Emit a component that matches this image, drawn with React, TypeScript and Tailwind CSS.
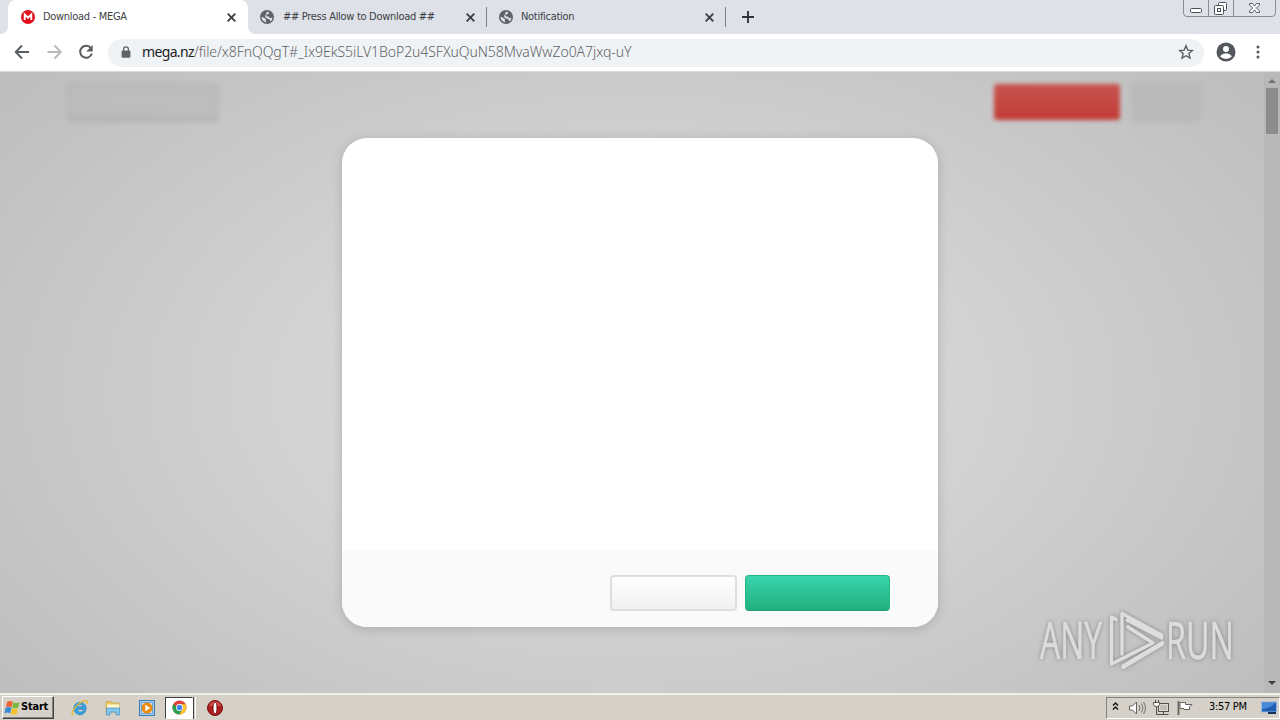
import React from 'react';

function Globe() {
  return (
    <svg className="h-[14px] w-[14px] shrink-0" viewBox="0 0 14 14">
      <circle cx="7" cy="7" r="7" fill="#5f6368" />
      <path d="M7 1.500 9.200 2.400 8.600 4 6.600 4.600 6.200 6.200 8.800 6.600 9.800 8.200 12.300 7.600 12 9.800 10.600 11.400 9.400 9.400 7.400 8.400 5.600 7.800 5 6 6 4.200zM1.500 6.800 4 7.800 6.200 9.400 5.600 10.600 6.800 12.400 4 11.600 2 9.400z" fill="#dee1e8" />
    </svg>
  );
}

function Cross() {
  return (
    <svg className="h-[9px] w-[9px] shrink-0" viewBox="0 0 9 9">
      <path d="M.7.7l7.600 7.600M8.300.7L.7 8.300" stroke="#3c4043" strokeWidth="1.900" />
    </svg>
  );
}

function TabStrip() {
  return (
    <div className="flex h-[34px] bg-[#dee1e8] font-['DejaVu_Sans_Condensed','DejaVu_Sans',sans-serif] text-[11px] text-[#3c4043]">
      <div className="flex w-[8px] shrink-0 bg-white">
        <div className="h-full w-full rounded-br-[7px] bg-[#dee1e8]" />
      </div>
      <div className="flex w-[240px] shrink-0 items-center rounded-t-[8px] bg-white pr-[12px] pl-[13px]">
        <svg className="h-[14px] w-[14px] shrink-0" viewBox="0 0 14 14">
          <circle cx="7" cy="7" r="7" fill="#e0101c" />
          <path d="M3.700 10V4.600L7 7.800l3.300-3.200V10" fill="none" stroke="#fff" strokeWidth="1.900" />
        </svg>
        <span className="ml-[8px] flex-1 whitespace-nowrap tracking-[-0.3px]">Download - MEGA</span>
        <Cross />
      </div>
      <div className="flex w-[239px] shrink-0 bg-white">
        <div className="flex w-full items-center rounded-bl-[7px] bg-[#dee1e8] pl-[12px]">
          <Globe />
          <span className="ml-[9px] flex-1 whitespace-nowrap tracking-[-0.3px]">## Press Allow to Download ##</span>
          <Cross />
          <div className="ml-[11px] h-[20px] w-px bg-[#80848a]" />
        </div>
      </div>
      <div className="flex w-[239px] shrink-0 items-center pl-[12px]">
        <Globe />
        <span className="ml-[8px] flex-1 whitespace-nowrap tracking-[-0.3px]">Notification</span>
        <Cross />
        <div className="ml-[11px] h-[20px] w-px bg-[#80848a]" />
      </div>
      <svg className="mt-[11px] ml-[16px] h-[12px] w-[12px]" viewBox="0 0 12 12">
        <path d="M6 0v12M0 6h12" stroke="#303338" strokeWidth="1.900" />
      </svg>
      <svg className="ml-auto h-[18px] w-[98px] shrink-0" viewBox="0 0 98 18" fill="none">
        <path d="M1.500 0v13q0 3.500 3.500 3.500h85q3.500 0 3.500-3.500V0M26.500 0v16M51.500 0v16" stroke="#8a8d94" />
        <rect x="8.500" y="8.500" width="11" height="4" rx="1" fill="#fff" stroke="#4c5059" />
        <path d="M36.500 3.500q0-1 1-1h6q1 0 1 1v6q0 1-1 1h-6q-1 0-1-1z" fill="#fff" stroke="#4c5059" />
        <rect x="32.500" y="5.500" width="9" height="9" rx="1" fill="#fff" stroke="#4c5059" />
        <rect x="35.500" y="8.500" width="3" height="3" stroke="#4c5059" />
        <path d="M67.500 3.500h3l2 2.500 2-2.500h3v1.500L74.500 8l3 3v1.500h-3l-2-2.500-2 2.500h-3V11l3-3-3-3z" fill="#f8f8fa" stroke="#5c6068" />
      </svg>
    </div>
  );
}

function Toolbar() {
  return (
    <div className="flex h-[37px] items-center bg-white">
      <svg className="ml-[12px] h-[20px] w-[96px] shrink-0" viewBox="0 0 96 20" fill="none">
        <path d="M17 9H4M10 2.500 3.700 9 10 15.500" stroke="#5a5d61" strokeWidth="1.900" />
        <path d="M35.500 9h13M42.500 2.500 48.800 9l-6.300 6.500" stroke="#b8babd" strokeWidth="1.900" />
        <path d="M79 5.200A6 6 0 1 0 79.900 10.500" stroke="#5a5d61" strokeWidth="2" />
        <path d="M80.700 2v6.500h-6.500z" fill="#5a5d61" />
      </svg>
      <div className="flex h-[28px] w-[1096px] shrink-0 items-center rounded-full bg-[#f0f3f5] pr-[10px] pl-[13px]">
        <svg className="mb-[2px] h-[12px] w-[10px] shrink-0" viewBox="0 0 10 12">
          <path d="M2.600 5V3.200a2.400 2.400 0 0 1 4.800 0V5" fill="none" stroke="#5f6368" strokeWidth="1.300" />
          <rect x=".6" y="4.500" width="8.800" height="7.200" rx="1" fill="#5f6368" />
        </svg>
        <span className="mb-[2px] ml-[11px] flex-1 text-[14px] font-light whitespace-nowrap text-[#5f6368]">
          <span className="font-normal tracking-[-0.65px] text-[#202124]">mega.nz</span>
          <span className="tracking-[-0.07px]">/file/x8FnQQgT#_Ix9EkS5iLV1BoP2u4SFXuQuN58MvaWwZo0A7jxq-uY</span>
        </span>
        <svg className="mb-[2px] h-[16px] w-[16px] shrink-0" viewBox="0 0 16 16">
          <path d="M8 1.800l1.800 4.300 4.600.4-3.500 3 1.100 4.600L8 11.700l-4 2.400 1.100-4.600-3.500-3 4.600-.4z" fill="none" stroke="#5a5d61" strokeWidth="1.400" />
        </svg>
      </div>
      <svg className="mb-[2px] ml-[12px] h-[20px] w-[20px] shrink-0" viewBox="0 0 20 20">
        <circle cx="10" cy="10" r="9.500" fill="#54575c" />
        <circle cx="10" cy="7" r="3" fill="#fff" />
        <path d="M4 14.200q2.400-3 6-3t6 3q-2.300 2.900-6 2.900t-6-2.900z" fill="#fff" />
      </svg>
      <svg className="mb-[1px] ml-[20px] h-[14px] w-[4px] shrink-0" viewBox="0 0 4 14" fill="#54575c">
        <circle cx="2" cy="2" r="1.500" /><circle cx="2" cy="7" r="1.500" /><circle cx="2" cy="12" r="1.500" />
      </svg>
    </div>
  );
}

function Watermark() {
  return (
    <svg className="absolute top-[536px] left-[1032px] h-[72px] w-[208px] overflow-visible drop-shadow-[0_0_2px_rgba(90,90,90,0.6)]" viewBox="0 0 208 72">
      <g fill="#dcdcdc" stroke="#dcdcdc" strokeWidth=".7" fontFamily="Open Sans, sans-serif" fontWeight="400" fontSize="51">
        <text x="8" y="51" textLength="62" lengthAdjust="spacingAndGlyphs">ANY</text>
        <text x="134" y="51" textLength="68" lengthAdjust="spacingAndGlyphs">RUN</text>
      </g>
      <g fill="none" stroke="#dedede" strokeWidth="3.300" strokeLinejoin="round" strokeLinecap="round">
        <path d="M90 46V5.500L129.500 27v3L95 12" />
        <path d="M84 11.500l-4.500-2.500v47L121 35 96 19" />
        <path d="M91 58v1.500L130.500 36v-1.500z" />
      </g>
    </svg>
  );
}

function Content() {
  return (
    <div className="relative flex h-[622px] overflow-hidden border-t border-[#dadada] bg-[#b9b9b9]">
      <div className="relative flex w-[1264px] shrink-0 flex-col overflow-hidden bg-[radial-gradient(ellipse_820px_500px_at_632px_318px,#dadada_0%,#d3d3d3_40%,#c6c6c6_75%,#b9b9b9_110%)]">
        <div className="flex h-[66px] pt-[12px] pl-[68px]">
          <div className="h-[37px] w-[150px] rounded-[3px] border-2 border-b-4 border-[#a4a4a4] bg-[#bbbbbb] opacity-70 blur-[3px]" />
          <div className="ml-[776px] h-[36px] w-[126px] rounded-[3px] bg-linear-to-b from-[#c6544f] to-[#c33a36] blur-[2px]" />
          <div className="ml-[12px] h-[37px] w-[68px] rounded-[3px] border-2 border-[#a6a6a6] bg-[#b6b6b6] opacity-60 blur-[3px]" />
        </div>
        <div className="ml-[342px] flex h-[489px] w-[596px] shrink-0 flex-col overflow-hidden rounded-[25px] bg-white shadow-[0_2px_12px_rgba(0,0,0,0.16)]">
          <div className="flex-1" />
          <div className="flex h-[77px] gap-[8px] bg-[#fafafa] pt-[25px] pl-[268px]">
            <button className="h-[36px] w-[127px] rounded-[4px] border-2 border-[#dedede] bg-linear-to-b from-white to-[#f1f1f1]" />
            <button className="h-[36px] w-[145px] rounded-[4px] border border-[#24b786] border-b-[#239f75] bg-linear-to-b from-[#3ad4ac] to-[#20b07d]" />
          </div>
        </div>
      </div>
      <div className="flex w-[16px] flex-col items-center bg-[#b8b8b8]">
        <svg className="h-[16px] w-[16px]" viewBox="0 0 16 16"><path d="M4 11l4-4 4 4z" fill="#727272" /></svg>
        <div className="h-[46px] w-[12px] bg-[#8c8c8c]" />
        <svg className="mt-auto h-[18px] w-[16px]" viewBox="0 0 16 18"><path d="M4 6h8l-4 4z" fill="#404040" /></svg>
      </div>
      <Watermark />
    </div>
  );
}

function Taskbar() {
  return (
    <div className="flex h-[27px] items-center border-t-2 border-[#f2f0eb] bg-[#d5d0c8] pl-[2px] font-['DejaVu_Sans_Condensed','DejaVu_Sans',sans-serif] text-black">
      <button className="flex h-[23px] w-[52px] shrink-0 items-center border border-t-white border-r-[#404040] border-b-[#404040] border-l-white pl-px shadow-[inset_-1px_-1px_#85827c]">
        <svg className="h-[16px] w-[17px] shrink-0" viewBox="0 0 17 16">
          <path d="M3.200 2q2.800-2 5.600-.2L7.600 7.200q-3-1.600-5.800 0z" fill="#ef6231" />
          <path d="M9.400 2.200q3 1.600 6.200-.2L14.200 7.500q-3 1.600-6-.1z" fill="#77b943" />
          <path d="M1.600 7.900q3-1.600 5.900 0L6.200 13.200q-3-1.600-5.800.2z" fill="#348bd6" />
          <path d="M8 8.200q3 1.600 6 0L12.700 14q-3 1.600-6-.2z" fill="#f6c12c" />
        </svg>
        <span className="text-[11px] font-bold tracking-[-0.2px]">Start</span>
      </button>
      <svg className="ml-[17px] h-[18px] w-[18px] shrink-0" viewBox="0 0 18 18" fill="none">
        <path d="M15.200 10.400H6.300a3.200 3.200 0 0 0 5.800 1.200h2.800A6.300 6.300 0 1 1 15.200 10.400zM6.300 7.800h5.800a3 3 0 0 0-5.800 0z" fill="#33a2e0" stroke="#1d75b9" strokeWidth=".5" />
        <path d="M2.500 15.500C-.5 17 1.500 10 7 5.500s11-5.500 8.500-.5" stroke="#e2b82e" strokeWidth="1.300" />
      </svg>
      <svg className="ml-[16px] h-[16px] w-[16px] shrink-0" viewBox="0 0 16 16">
        <path d="M1 1.500h5l1 1.500h7v9H1z" fill="#eac963" stroke="#c49b32" strokeWidth=".6" />
        <path d="M2 4.500h12V8H2z" fill="#fff6ce" />
        <path d="M1.500 8h13v7H11v-3H5v3H1.500z" fill="#83c7ed" stroke="#438fbd" strokeWidth=".7" />
      </svg>
      <svg className="ml-[18px] h-[16px] w-[16px] shrink-0" viewBox="0 0 16 16">
        <rect x=".5" y=".5" width="15" height="15" fill="#a9d3f1" stroke="#3a7bb5" />
        <rect x="2.500" y="2.500" width="11" height="11" fill="#d9e8f2" stroke="#6ba3cf" />
        <circle cx="8" cy="8" r="5.500" fill="#ed8b13" />
        <path d="M6.300 4.800 11.200 8l-4.900 3.200z" fill="#fff" />
      </svg>
      <div className="ml-[10px] flex h-[22px] w-[28px] shrink-0 items-center justify-center border border-t-[#404040] border-r-white border-b-white border-l-[#404040] bg-white">
        <svg className="h-[15px] w-[15px]" viewBox="0 0 16 16">
          <circle cx="8" cy="8" r="7.500" fill="#dc4437" />
          <path d="M1.500 4.250A7.500 7.500 0 0 0 8 15.500l3.200-5.600-3.200-1.900H5z" fill="#2da14f" />
          <path d="M8 15.500A7.500 7.500 0 0 0 14.500 4.500H8l3.200 5.300z" fill="#fbc62e" />
          <circle cx="8" cy="8" r="3.700" fill="#fff" /><circle cx="8" cy="8" r="2.900" fill="#4285f4" />
        </svg>
      </div>
      <div className="h-[22px] w-[3px] border-r border-l border-r-white border-l-[#404040] bg-[#d5d0c8]" />
      <svg className="ml-[11px] h-[16px] w-[16px] shrink-0" viewBox="0 0 16 16">
        <circle cx="8" cy="8" r="7.500" fill="#b01d20" stroke="#74100f" />
        <path d="M2 6a6.300 6.300 0 0 1 12 0z" fill="#cb4b48" />
        <ellipse cx="8" cy="8" rx="2.600" ry="5.800" fill="#6d0f0f" />
        <ellipse cx="8" cy="8" rx="1.500" ry="5.300" fill="#fff" />
      </svg>
      <div className="ml-auto flex h-[22px] w-[174px] items-center border border-t-[#85827c] border-r-white border-b-white border-l-[#85827c] pr-[1px] pl-[5px]">
        <svg className="h-[18px] w-[82px] shrink-0" viewBox="0 0 82 18" fill="none">
          <path d="M1 6.500l2.500-2.500L6 6.500M1 10.500L3.500 8 6 10.500" stroke="#111" strokeWidth="1.400" />
          <path d="M17.500 7h3l4-4v12l-4-4h-3z" fill="#fff" stroke="#66635e" />
          <path d="M27 6q2 3 0 6M29.500 4.500q3 4.500 0 9M31.500 3q4 6 0 12" stroke="#77746f" />
          <rect x="46.500" y="4.500" width="10" height="8" fill="#dedbd5" stroke="#55524e" />
          <rect x="48" y="6" width="7" height="5" fill="#c2bfb8" />
          <path d="M47 15.500h9.500M51.500 13v2M44.500 8v7.500h3" stroke="#55524e" />
          <path d="M43.500 1v2M46.500 1v2M41.500 3.500h6v2q0 2-3 2t-3-2z" fill="#fff" stroke="#55524e" />
          <path d="M66.500 2v14" stroke="#66635e" strokeWidth="1.800" />
          <path d="M68 3.500h5.500v2H80L77.500 8l0 2.500H72V9.500h-4z" fill="#fff" stroke="#66635e" />
        </svg>
        <span className="ml-[15px] flex-1 text-[11px] tracking-[-0.3px] whitespace-nowrap">3:57 PM</span>
        <svg className="h-[15px] w-[17px] shrink-0" viewBox="0 0 17 15">
          <path d="M.5 2h15v10H.5z" fill="#205fb6" stroke="#91b7df" />
          <path d="M1 9q8 0 13-6V3H1z" fill="#468bd9" />
          <path d="M7 13h8" stroke="#16315b" strokeWidth="2" />
        </svg>
      </div>
    </div>
  );
}

export default function App() {
  return (
    <div className="flex h-[720px] w-[1280px] flex-col overflow-hidden font-['Noto_Sans',sans-serif]">
      <TabStrip />
      <Toolbar />
      <Content />
      <Taskbar />
    </div>
  );
}
